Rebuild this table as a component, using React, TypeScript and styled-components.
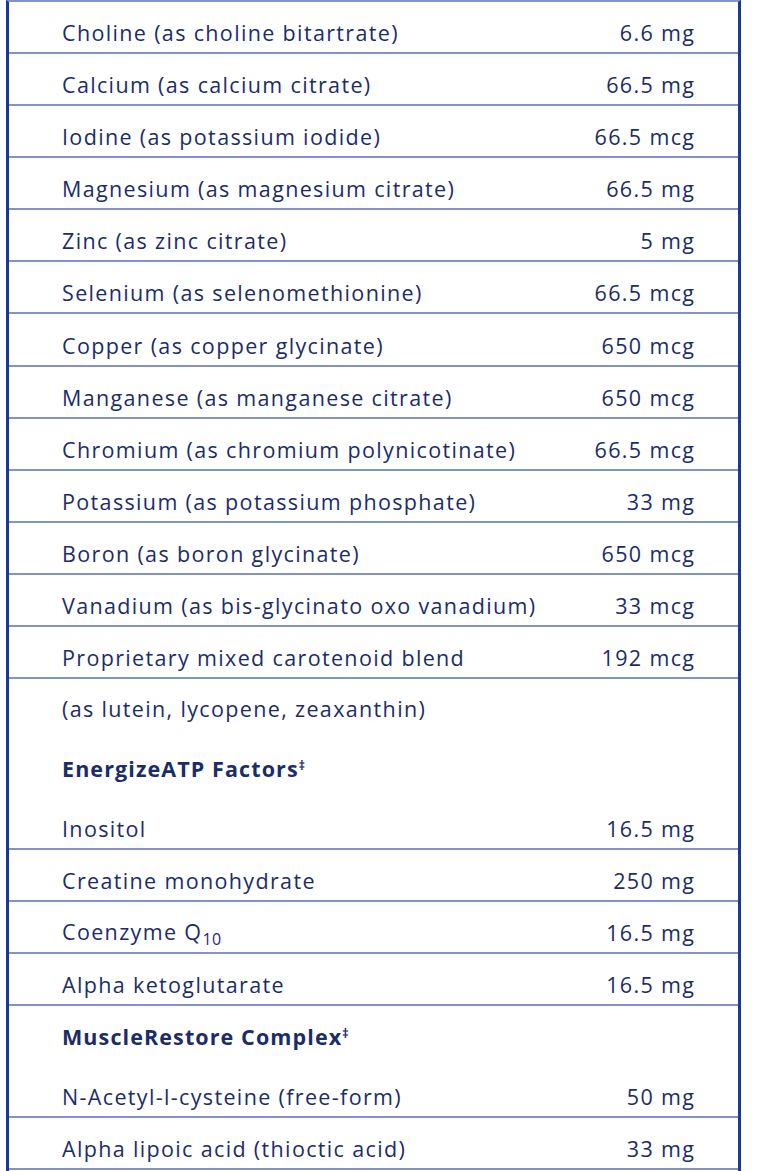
import React from "react";
import styled, { createGlobalStyle } from "styled-components";

const Global = createGlobalStyle`
  html, body { margin: 0; padding: 0; background: #ffffff; }
  body { font-family: "Open Sans", "Noto Sans", sans-serif; }
`;

const Panel = styled.div`
  margin-left: 6px;
  width: 735px;
  box-sizing: border-box;
  border-left: 3px solid #1a3896;
  border-right: 3px solid #1a3896;
  border-top: 2px solid #8294c6;
  min-height: 1171px;
`;

const Row = styled.div<{ $lined: boolean; $tall: boolean }>`
  display: flex;
  justify-content: space-between;
  align-items: center;
  box-sizing: border-box;
  height: ${(p) => (p.$tall ? 59.5 : 52.08)}px;
  padding: ${(p) => (p.$tall ? "19px 44px 16px 53px" : "19px 44px 7px 53px")};
  border-bottom: 2px solid ${(p) => (p.$lined ? "#8294c6" : "transparent")};
  color: #1b2c6a;
  font-size: 21.5px;
  line-height: 24px;
  letter-spacing: 1.35px;
  font-variant-ligatures: none;
`;

const Name = styled.span<{ $bold?: boolean }>`
  font-weight: ${(p) => (p.$bold ? 700 : 500)};
  letter-spacing: ${(p) => (p.$bold ? "1.1px" : "1.35px")};
  white-space: nowrap;
`;

const Amount = styled.span`
  font-weight: 500;
  white-space: nowrap;
  text-align: right;
  margin-right: -1.35px;
`;

const Sup = styled.sup`
  font-size: 12px;
  vertical-align: top;
  position: relative;
  top: -3px;
  margin-left: 0;
`;

const Sub = styled.sub`
  font-size: 16px;
  vertical-align: baseline;
  position: relative;
  top: 5px;
  letter-spacing: 0.5px;
`;

type Item = {
  name: React.ReactNode;
  amount?: string;
  bold?: boolean;
  lined?: boolean;
  tall?: boolean;
};

const items: Item[] = [
  { name: "Choline (as choline bitartrate)", amount: "6.6 mg" },
  { name: "Calcium (as calcium citrate)", amount: "66.5 mg" },
  { name: "Iodine (as potassium iodide)", amount: "66.5 mcg" },
  { name: "Magnesium (as magnesium citrate)", amount: "66.5 mg" },
  { name: "Zinc (as zinc citrate)", amount: "5 mg" },
  { name: "Selenium (as selenomethionine)", amount: "66.5 mcg" },
  { name: "Copper (as copper glycinate)", amount: "650 mcg" },
  { name: "Manganese (as manganese citrate)", amount: "650 mcg" },
  { name: "Chromium (as chromium polynicotinate)", amount: "66.5 mcg" },
  { name: "Potassium (as potassium phosphate)", amount: "33 mg" },
  { name: "Boron (as boron glycinate)", amount: "650 mcg" },
  { name: "Vanadium (as bis-glycinato oxo vanadium)", amount: "33 mcg" },
  { name: "Proprietary mixed carotenoid blend", amount: "192 mcg" },
  { name: "(as lutein, lycopene, zeaxanthin)", lined: false, tall: true },
  {
    name: (
      <>
        EnergizeATP Factors<Sup>‡</Sup>
      </>
    ),
    bold: true,
    lined: false,
    tall: true,
  },
  { name: "Inositol", amount: "16.5 mg" },
  { name: "Creatine monohydrate", amount: "250 mg" },
  {
    name: (
      <>
        Coenzyme Q<Sub>10</Sub>
      </>
    ),
    amount: "16.5 mg",
  },
  { name: "Alpha ketoglutarate", amount: "16.5 mg" },
  {
    name: (
      <>
        MuscleRestore Complex<Sup>‡</Sup>
      </>
    ),
    bold: true,
    lined: false,
    tall: true,
  },
  { name: "N-Acetyl-l-cysteine (free-form)", amount: "50 mg" },
  { name: "Alpha lipoic acid (thioctic acid)", amount: "33 mg" },
];

export default function App() {
  return (
    <>
      <Global />
      <Panel>
        {items.map((it, i) => (
          <Row key={i} $lined={it.lined !== false} $tall={!!it.tall}>
            <Name $bold={it.bold}>{it.name}</Name>
            {it.amount && <Amount>{it.amount}</Amount>}
          </Row>
        ))}
      </Panel>
    </>
  );
}
